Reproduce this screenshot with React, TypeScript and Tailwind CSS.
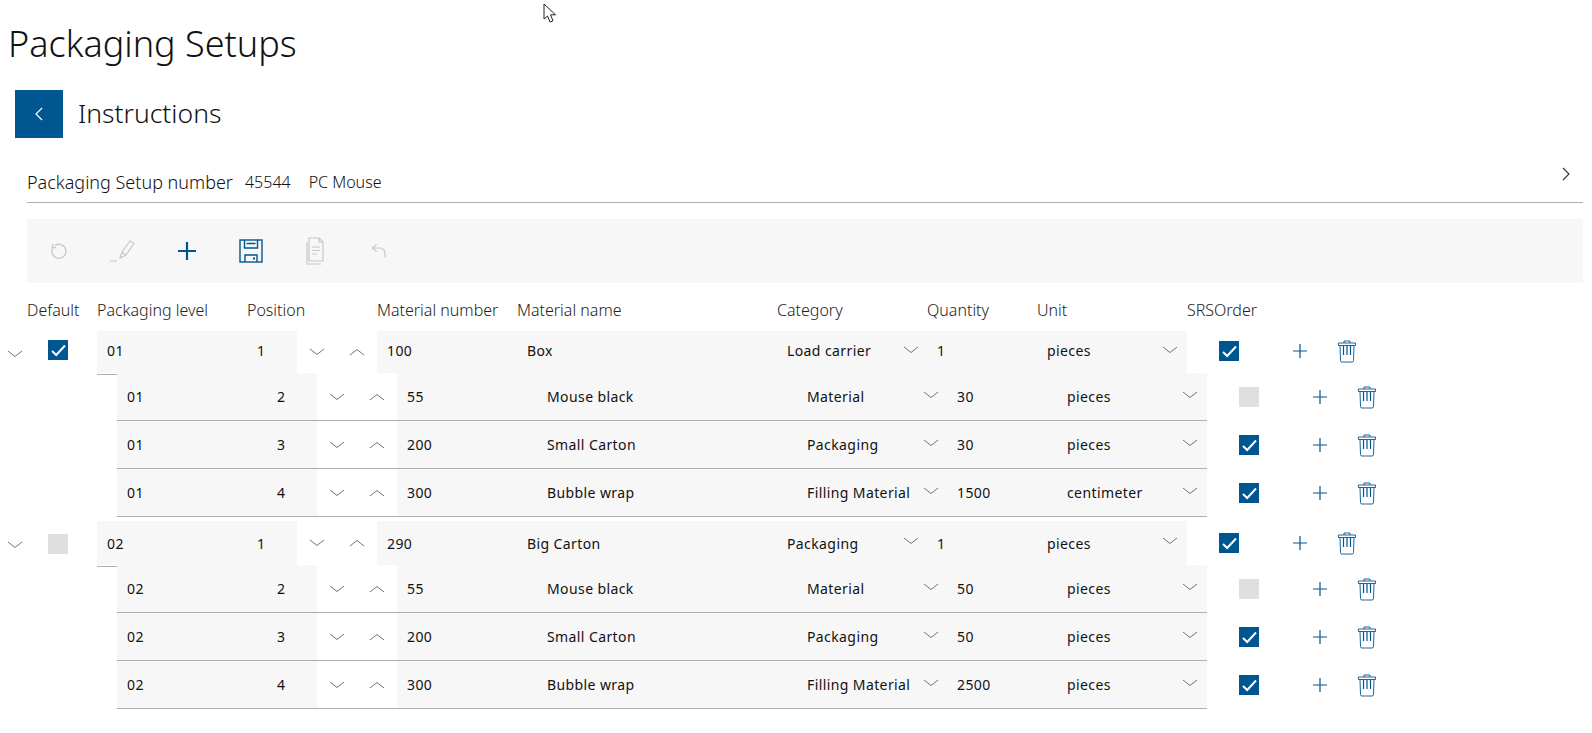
const blue = '#005691';

function Chevron({ up = false }: { up?: boolean }) {
  return (
    <svg width="16" height="8" viewBox="0 0 16 8" fill="none" stroke="#6b7580" strokeWidth="1">
      <path d={up ? 'M1 7 8 1.500 15 7' : 'M1 1 8 6.500 15 1'} />
    </svg>
  );
}

function Plus({ size = 14, width = 1.2 }: { size?: number; width?: number }) {
  return (
    <svg width={size} height={size} viewBox="0 0 14 14" fill="none" stroke={blue} strokeWidth={width}>
      <path d="M7 0v14M0 7h14" />
    </svg>
  );
}

function Trash() {
  return (
    <svg width="20" height="23" viewBox="0 0 20 23" fill="none" stroke={blue} strokeWidth="0.900">
      <path d="M7 3V1h6v2M1.500 3h17v2.500h-17z" />
      <path d="M3 5.500l.5 15a1.500 1.500 0 0 0 1.500 1.500h10a1.500 1.500 0 0 0 1.500-1.500l.5-15" />
      <path d="M6.500 6v9M10 6v9M13.500 6v9" strokeWidth="1.200" />
    </svg>
  );
}

function Check({ on }: { on: boolean }) {
  if (!on) return <div className="w-5 h-5 bg-[#dfdfe0]" />;
  return (
    <div className="w-5 h-5 bg-[#005691] flex items-center justify-center">
      <svg width="15" height="13" viewBox="0 0 15 13" fill="none" stroke="#fff" strokeWidth="2">
        <path d="M1 7 5.200 11 14 1.500" />
      </svg>
    </div>
  );
}

type Row = { level: string; pos: string; num: string; name: string; cat: string; qty: string; unit: string; order: boolean };

function Cells({ row, child, lift = false }: { row: Row; child: boolean; lift?: boolean }) {
  const line = child ? 'border-b border-[#a8afb5]' : '';
  // the first row of the table sits a little higher inside its cell
  const text = lift ? 'pb-[4px]' : '';
  const arrow = lift ? '-mt-[1px]' : '-mt-[4px]';
  return (
    <>
      <div className={`w-[150px] h-full bg-[#f7f7f7] flex items-center pl-[10px] ${text} ${line}`}>{row.level}</div>
      <div className={`w-[50px] h-full bg-[#f7f7f7] flex items-center pl-[10px] ${text} ${line}`}>{row.pos}</div>
      <div className={`w-[80px] h-full bg-white flex items-center ${line}`}>
        <div className="w-10 flex justify-center"><Chevron /></div>
        <div className="w-10 flex justify-center"><Chevron up /></div>
      </div>
      <div className={`w-[140px] h-full bg-[#f7f7f7] flex items-center pl-[10px] ${text} ${line}`}>{row.num}</div>
      <div className={`w-[260px] h-full bg-[#f7f7f7] flex items-center pl-[10px] ${text} ${line}`}>{row.name}</div>
      <div className={`w-[150px] h-full bg-[#f7f7f7] flex items-center justify-between pl-[10px] pr-[8px] ${text} ${line}`}>
        <span className="whitespace-nowrap">{row.cat}</span>
        <span className={arrow}><Chevron /></span>
      </div>
      <div className={`w-[110px] h-full bg-[#f7f7f7] flex items-center pl-[10px] ${text} ${line}`}>{row.qty}</div>
      <div className={`w-[150px] h-full bg-[#f7f7f7] flex items-center justify-between pl-[10px] pr-[9px] ${text} ${line}`}>
        <span>{row.unit}</span>
        <span className={arrow}><Chevron /></span>
      </div>
      <div className="w-[32px]" />
      <div className={lift ? '-mt-[2px]' : ''}><Check on={row.order} /></div>
      <div className="w-[54px]" />
      <div className={lift ? '-mt-[2px]' : ''}><Plus /></div>
      <div className="w-[30px]" />
      <div className={lift ? '-mt-[2px]' : ''}><Trash /></div>
    </>
  );
}

function Group({ parent, children, first }: { parent: Row; children: Row[]; first: boolean }) {
  return (
    <div className="mb-[4px]">
      <div className={`flex items-start ${first ? 'h-[44px]' : 'h-[46px]'}`}>
        <div className={`w-[28px] flex items-center justify-center pl-[1px] ${first ? 'h-[42px] pt-[4px]' : 'h-[46px] pt-[2px]'}`}><Chevron /></div>
        <div className={`w-[69px] flex items-center pl-[20px] ${first ? 'h-[38px]' : 'h-[46px]'}`}><Check on={first} /></div>
        <div className={`relative flex items-center ${first ? 'h-[42px]' : 'h-[44px]'}`}>
          <Cells row={parent} child={false} lift={first} />
          <div className={`absolute left-0 w-[20px] h-px bg-[#a8afb5] ${first ? 'top-[43px]' : 'top-[45px]'}`} />
        </div>
      </div>
      <div className="-mt-[2px]">
        {children.map((c) => (
          <div key={c.pos} className="flex items-center h-[48px] ml-[117px] relative">
            <Cells row={c} child />
          </div>
        ))}
      </div>
    </div>
  );
}

const groups: { parent: Row; children: Row[] }[] = [
  {
    parent: { level: '01', pos: '1', num: '100', name: 'Box', cat: 'Load carrier', qty: '1', unit: 'pieces', order: true },
    children: [
      { level: '01', pos: '2', num: '55', name: 'Mouse black', cat: 'Material', qty: '30', unit: 'pieces', order: false },
      { level: '01', pos: '3', num: '200', name: 'Small Carton', cat: 'Packaging', qty: '30', unit: 'pieces', order: true },
      { level: '01', pos: '4', num: '300', name: 'Bubble wrap', cat: 'Filling Material', qty: '1500', unit: 'centimeter', order: true },
    ],
  },
  {
    parent: { level: '02', pos: '1', num: '290', name: 'Big Carton', cat: 'Packaging', qty: '1', unit: 'pieces', order: true },
    children: [
      { level: '02', pos: '2', num: '55', name: 'Mouse black', cat: 'Material', qty: '50', unit: 'pieces', order: false },
      { level: '02', pos: '3', num: '200', name: 'Small Carton', cat: 'Packaging', qty: '50', unit: 'pieces', order: true },
      { level: '02', pos: '4', num: '300', name: 'Bubble wrap', cat: 'Filling Material', qty: '2500', unit: 'pieces', order: true },
    ],
  },
];

const headers: [string, string][] = [
  ['Default', 'w-[70px]'],
  ['Packaging level', 'w-[150px]'],
  ['Position', 'w-[130px]'],
  ['Material number', 'w-[140px]'],
  ['Material name', 'w-[260px]'],
  ['Category', 'w-[150px]'],
  ['Quantity', 'w-[110px]'],
  ['Unit', 'w-[150px]'],
  ['SRSOrder', 'w-[100px]'],
];

export default function App() {
  return (
    <div className="relative w-full h-[733px] overflow-hidden bg-white text-[#111] font-['Noto_Sans',sans-serif] text-[14px] tracking-[0.4px]">
      <svg className="absolute left-[543px] top-[3px]" width="16" height="22" viewBox="0 0 16 22" fill="#fff" stroke="#222" strokeWidth="1">
        <path d="M1 1v15l3.500-3 2.500 6 3-1.200-2.500-6h5z" />
      </svg>

      <h1 className="pl-2 pt-[22px] h-[66px] text-[36px] leading-[44px] font-light tracking-normal">Packaging Setups</h1>

      <div className="flex items-center mt-[24px] ml-[15px] h-12">
        <div className="w-12 h-12 bg-[#005691] flex items-center justify-center">
          <svg width="8" height="14" viewBox="0 0 8 14" fill="none" stroke="#fff" strokeWidth="1.200">
            <path d="M7 1 1 7l6 6" />
          </svg>
        </div>
        <div className="ml-[15px] text-[26.500px] font-light tracking-normal">Instructions</div>
      </div>

      <div className="flex items-center h-[39px] mt-[26px] ml-[27px] mr-[9px] border-b border-[#a8afb5] pb-[2px] font-light tracking-normal">
        <span className="text-[18px]">Packaging Setup number</span>
        <span className="ml-3 text-[16px]">45544</span>
        <span className="ml-[18px] text-[16px]">PC Mouse</span>
        <svg className="ml-auto mr-[13px] -mt-[16px]" width="8" height="14" viewBox="0 0 8 14" fill="none" stroke="#333" strokeWidth="1.100">
          <path d="M1 1l6 6-6 6" />
        </svg>
      </div>

      <div className="flex items-center h-16 mt-4 ml-[27px] mr-[9px] bg-[#f7f7f7]">
        <div className="w-16 flex justify-center">
          <svg width="18" height="18" viewBox="0 0 18 18" fill="none" stroke="#c8c8c8" strokeWidth="1.300">
            <path d="M5 3.500a7 7 0 1 1-2.500 3M2.500 2v3.500H6" />
          </svg>
        </div>
        <div className="w-16 flex justify-center">
          <svg width="28" height="24" viewBox="0 0 28 24" fill="none" stroke="#c8c8c8" strokeWidth="1.200">
            <path d="M1 22h7M11 19l2-6L21 2l4 2.500L17 16zM11 19l6-3M13 13l4 3" />
          </svg>
        </div>
        <div className="w-16 flex justify-center"><Plus size={18} width={1.700} /></div>
        <div className="w-16 flex justify-center">
          <svg width="24" height="24" viewBox="0 0 24 24" fill="none" stroke={blue} strokeWidth="1.400">
            <rect x="1" y="1" width="22" height="22" />
            <path d="M5.500 1v8h13V1M7.500 4.500h9M6 23v-7h12v7" />
            <path d="M14 18.500h2v2h-2z" fill={blue} stroke="none" />
          </svg>
        </div>
        <div className="w-16 flex justify-center">
          <svg width="20" height="28" viewBox="0 0 20 28" fill="none" stroke="#c8c8c8" strokeWidth="1.200">
            <path d="M2 5v22h14" />
            <path d="M4 24V1h10l4 4v19zM14 1v4h4M7 10h8M7 13.500h8M7 17h5" />
          </svg>
        </div>
        <div className="w-16 flex justify-center">
          <svg width="16" height="16" viewBox="0 0 16 16" fill="none" stroke="#c8c8c8" strokeWidth="1.200">
            <path d="M5.500 1.500 1.500 5l4 3.500M1.500 5H9a5 5 0 0 1 5 5v4.500" />
          </svg>
        </div>
      </div>

      <div className="flex items-center h-6 mt-[15px] ml-[27px] text-[16px] font-light text-[#222] tracking-normal">
        {headers.map(([label, w]) => (
          <div key={label} className={`${w} whitespace-nowrap`}>{label}</div>
        ))}
      </div>

      <div className="mt-[9px]">
        {groups.map((g, i) => (
          <Group key={g.parent.level} parent={g.parent} children={g.children} first={i === 0} />
        ))}
      </div>
    </div>
  );
}
